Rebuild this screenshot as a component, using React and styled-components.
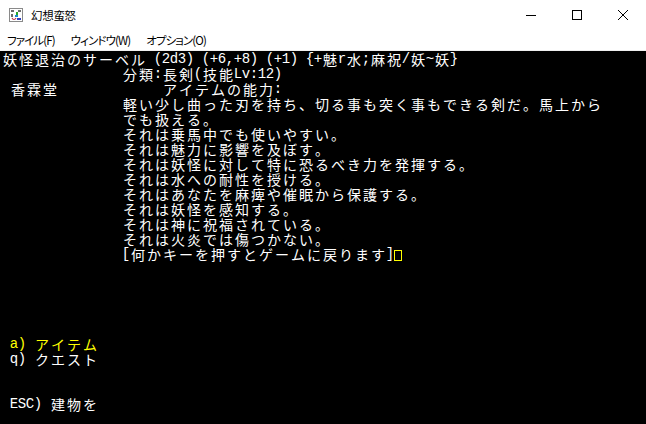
import React from 'react';
import styled, { createGlobalStyle } from 'styled-components';

const GlobalStyle = createGlobalStyle`
  html, body {
    margin: 0;
    padding: 0;
    background: #000000;
    overflow: hidden;
  }
`;

const Window = styled.div`
  width: 646px;
  height: 424px;
  display: flex;
  flex-direction: column;
  background: #000000;
`;

const TitleBar = styled.div`
  height: 30px;
  display: flex;
  align-items: center;
  background: #ffffff;
`;

const AppIcon = styled.div`
  width: 14px;
  height: 14px;
  margin-left: 9px;
  margin-right: 8px;
  display: flex;
`;

const Title = styled.span`
  flex: 1;
  font-family: "Noto Sans CJK JP", sans-serif;
  font-size: 11.5px;
  color: #000000;
  letter-spacing: -0.3px;
`;

const CaptionButton = styled.div`
  width: 46px;
  height: 30px;
  display: flex;
  align-items: center;
  justify-content: center;
`;

const MenuBar = styled.div`
  height: 20px;
  display: flex;
  align-items: center;
  background: #ffffff;
  border-bottom: 1px solid #f0f0f0;
  padding-left: 0;
`;

const MenuItem = styled.span`
  padding: 0 7px;
  margin-right: 2px;
  font-family: "Noto Sans CJK JP", sans-serif;
  font-size: 11.5px;
  font-feature-settings: "palt";
  letter-spacing: -0.9px;
  color: #000000;
`;

const Term = styled.div`
  flex: 1;
  padding: 1px 0 0 2px;
  background: #000000;
`;

const Row = styled.div`
  height: 15px;
  display: flex;
  align-items: center;
  white-space: pre;
`;

const Cell = styled.span`
  width: ${(p) => (p.$wide ? 16 : 8)}px;
  height: 15px;
  flex: none;
  display: flex;
  align-items: center;
  justify-content: center;
  color: ${(p) => p.$color};
  font-family: ${(p) => (p.$wide ? '"Noto Sans CJK JP", sans-serif' : '"Liberation Mono", monospace')};
  font-size: ${(p) => (p.$wide ? 14 : 14)}px;
  line-height: 15px;
`;

const Cursor = styled.span`
  width: 8px;
  height: 15px;
  flex: none;
  display: flex;
  align-items: flex-end;
  justify-content: center;
  &::after {
    content: '';
    width: 6px;
    height: 9px;
    margin-bottom: 1px;
    border: 1px solid #ffff00;
  }
`;

const WHITE = '#ffffff';
const YELLOW = '#ffff00';

const isWide = (ch) => {
  const c = ch.codePointAt(0);
  return c > 0xff && !(c >= 0xff61 && c <= 0xff9f);
};

// each row: list of [column, text, colour]
const screen = [
  [[0, '妖怪退治のサーベル (2d3) (+6,+8) (+1) {+魅r水;麻祝/妖~妖}']],
  [[15, '分類:長剣(技能Lv:12)']],
  [[1, '香霖堂'], [20, 'アイテムの能力:']],
  [[15, '軽い少し曲った刃を持ち、切る事も突く事もできる剣だ。馬上から']],
  [[15, 'でも扱える。']],
  [[15, 'それは乗馬中でも使いやすい。']],
  [[15, 'それは魅力に影響を及ぼす。']],
  [[15, 'それは妖怪に対して特に恐るべき力を発揮する。']],
  [[15, 'それは水への耐性を授ける。']],
  [[15, 'それはあなたを麻痺や催眠から保護する。']],
  [[15, 'それは妖怪を感知する。']],
  [[15, 'それは神に祝福されている。']],
  [[15, 'それは火炎では傷つかない。']],
  [[15, '[何かキーを押すとゲームに戻ります]']],
  [], [], [], [], [],
  [[1, 'a) アイテム', YELLOW]],
  [[1, 'q) クエスト']],
  [], [],
  [[1, 'ESC) 建物を']],
];

const TermRow = ({ segments, cursor }) => {
  const cells = [];
  let col = 0;
  segments.forEach(([start, text, color = WHITE], si) => {
    while (col < start) {
      cells.push(<Cell key={`p${si}-${col}`} $color={WHITE}> </Cell>);
      col += 1;
    }
    Array.from(text).forEach((ch, i) => {
      const wide = isWide(ch);
      cells.push(
        <Cell key={`${si}-${i}`} $wide={wide} $color={color}>
          {ch}
        </Cell>
      );
      col += wide ? 2 : 1;
    });
  });
  return (
    <Row>
      {cells}
      {cursor && <Cursor />}
    </Row>
  );
};

const GameIcon = () => (
  <svg width="14" height="14" viewBox="0 0 14 14">
    <rect x="0.5" y="0.5" width="13" height="13" fill="#ffffff" stroke="#8a8a8a" />
    <path d="M2 2h3v2H2zM9 2h3v2H9zM2 6h2v3H2z" fill="#6b6b6b" />
    <path d="M7 4h2v3H7z" fill="#2aa82a" />
    <path d="M6 7h3v2H6z" fill="#1a8ad0" />
    <path d="M3 10c1 2 3 2 4 0" stroke="#c0304a" strokeWidth="1.2" fill="none" />
    <path d="M8 10h4v2H8z" fill="#3040c0" />
  </svg>
);

const App = () => (
  <>
    <GlobalStyle />
    <Window>
      <TitleBar>
        <AppIcon>
          <GameIcon />
        </AppIcon>
        <Title>幻想蛮怒</Title>
        <CaptionButton>
          <svg width="10" height="10" viewBox="0 0 10 10">
            <path d="M0 5.5h10" stroke="#000" strokeWidth="1" />
          </svg>
        </CaptionButton>
        <CaptionButton>
          <svg width="10" height="10" viewBox="0 0 10 10">
            <rect x="0.5" y="0.5" width="9" height="9" fill="none" stroke="#000" strokeWidth="1" />
          </svg>
        </CaptionButton>
        <CaptionButton>
          <svg width="10" height="10" viewBox="0 0 10 10">
            <path d="M0 0l10 10M10 0L0 10" stroke="#000" strokeWidth="1" />
          </svg>
        </CaptionButton>
      </TitleBar>
      <MenuBar>
        <MenuItem>ファイル(F)</MenuItem>
        <MenuItem>ウィンドウ(W)</MenuItem>
        <MenuItem>オプション(O)</MenuItem>
      </MenuBar>
      <Term>
        {screen.map((segments, i) => (
          <TermRow key={i} segments={segments} cursor={i === 13} />
        ))}
      </Term>
    </Window>
  </>
);

export default App;
